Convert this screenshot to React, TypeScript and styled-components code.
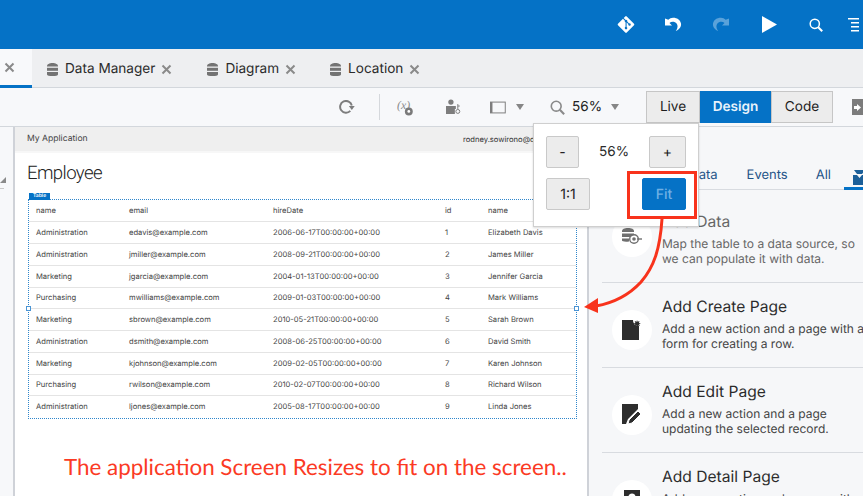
import React from "react";
import styled, { createGlobalStyle } from "styled-components";
import { FaGitAlt } from "react-icons/fa";

const GlobalStyle = createGlobalStyle`
  html, body {
    margin: 0;
    padding: 0;
    background: #f7f8fa;
  }
  body {
    font-family: Inter, "Liberation Sans", sans-serif;
    color: #222;
    text-rendering: geometricPrecision;
  }
`;

const Page = styled.div`
  position: relative;
  width: 863px;
  height: 496px;
  overflow: hidden;
  display: flex;
  flex-direction: column;
`;

const Header = styled.header`
  height: 49px;
  flex: none;
  background: #0572c6;
  display: flex;
  align-items: center;
  padding-left: 617px;
  color: #fff;
`;

const HeaderIcon = styled.div<{ $gap: number; $width: number }>`
  width: ${(p) => p.$width}px;
  margin-left: ${(p) => p.$gap}px;
  flex: none;
  display: flex;
  justify-content: center;
  align-items: center;
`;

const TabBar = styled.div`
  height: 38px;
  flex: none;
  background: #eeeff1;
  border-bottom: 1px solid #d3d7dc;
  display: flex;
`;

const ActiveTab = styled.div`
  width: 32px;
  background: #f8f9fb;
  border-bottom: 3px solid #0572c6;
  margin-bottom: -1px;
  display: flex;
  align-items: center;
  padding: 1px 0 0 4px;
  box-sizing: border-box;
`;

const Tab = styled.div<{ $gap: number }>`
  display: flex;
  align-items: center;
  font-size: 13.6px;
  color: #2b2b2b;
  margin-left: ${(p) => p.$gap}px;
  padding-top: 2px;
  gap: 7px;
`;

const TabClose = styled.span`
  display: inline-flex;
  margin-left: -1px;
`;

const Toolbar = styled.div`
  height: 38px;
  flex: none;
  background: #f7f8fa;
  border-bottom: 1px solid #d3d7dc;
  display: flex;
  align-items: center;
  padding-left: 339px;
`;

const ToolDivider = styled.div`
  width: 1px;
  height: 26px;
  background: #d5d8dc;
  margin: 0 17px 0 24px;
`;

const ZoomValue = styled.span`
  font-size: 13.6px;
  color: #222;
  margin: 0 9px 0 7px;
`;

const Caret = styled.span<{ $gap?: number }>`
  width: 0;
  height: 0;
  border-left: 4.5px solid transparent;
  border-right: 4.5px solid transparent;
  border-top: 6px solid #868686;
  margin-left: ${(p) => p.$gap ?? 0}px;
`;

const ModeGroup = styled.div`
  display: flex;
  height: 32px;
  margin-left: 27px;
  border-radius: 2px;
`;

const ModeButton = styled.div<{ $active?: boolean; $width: number }>`
  width: ${(p) => p.$width}px;
  box-sizing: border-box;
  display: flex;
  align-items: center;
  justify-content: center;
  font-size: 13.6px;
  font-weight: ${(p) => (p.$active ? 600 : 400)};
  color: ${(p) => (p.$active ? "#e8f2fb" : "#1d1d1d")};
  background: ${(p) => (p.$active ? "#0572c6" : "#ececec")};
  border: 1px solid ${(p) => (p.$active ? "#0572c6" : "#c6c6c6")};
`;

const ToolEnd = styled.div`
  margin-left: 19px;
  width: 11px;
  height: 16px;
  background: #7c7c7c;
  display: flex;
  align-items: center;
  justify-content: center;
  flex: none;
`;

const Body = styled.div`
  flex: 1;
  display: flex;
  min-height: 0;
`;

const Gutter = styled.div`
  width: 13px;
  flex: none;
  background: #f7f8fa;
  border-right: 2px solid #cfd2d8;
  padding-top: 50px;
`;

const GutterMark = styled.div`
  width: 0;
  height: 0;
  border-left: 6px solid transparent;
  border-bottom: 6px solid #8a8a8a;
`;

const GutterRule = styled.div`
  width: 4px;
  height: 1px;
  margin-top: 5px;
  background: #c9c9c9;
`;

const Canvas = styled.main`
  width: 572px;
  flex: none;
  background: #fff;
  border-right: 2px solid #cfd2d8;
`;

const AppBar = styled.div`
  height: 24px;
  background: #efefef;
  border-bottom: 2px solid #f7f7f7;
  display: flex;
  align-items: center;
  justify-content: space-between;
  padding: 0 12px;
  font-size: 8.6px;
  color: #444;
`;

const AppUser = styled.span`
  font-size: 7.6px;
  color: #333;
  white-space: nowrap;
  width: 112px;
  overflow: hidden;
`;

const PageTitle = styled.h1`
  margin: 0;
  padding: 9px 0 0 12px;
  height: 36px;
  box-sizing: border-box;
  font-family: Roboto, Inter, sans-serif;
  font-size: 18.6px;
  font-weight: 300;
  letter-spacing: -0.6px;
  color: #222;
`;

const TableWrap = styled.div`
  position: relative;
  margin: 10px 0 0 13px;
  width: 549px;
  box-sizing: border-box;
  border: 1px dotted #2f86cc;
`;

const TableBadge = styled.span`
  position: absolute;
  top: -7px;
  left: 0;
  height: 7px;
  width: 21px;
  background: #0572c6;
  color: #fff;
  font-size: 5px;
  font-weight: 600;
  line-height: 7px;
  text-align: center;
`;

const Handle = styled.span<{ $side: "left" | "right" }>`
  position: absolute;
  top: 106px;
  ${(p) => p.$side}: -3px;
  width: 3px;
  height: 3px;
  background: #fff;
  border: 1px solid #4a94d4;
`;

const Grid = styled.table`
  width: 100%;
  border-collapse: collapse;
  table-layout: fixed;
  font-size: 7.6px;
  color: #444;

  td {
    height: 21.75px;
    padding: 0 0 0 7px;
    box-sizing: border-box;
    white-space: nowrap;
    border-top: 1px solid #e4e4e4;
  }

  tr:first-child td {
    border-top: none;
  }
`;

const Annotation = styled.div`
  margin: 34px 0 0 49px;
  font-family: Lato, "Open Sans", sans-serif;
  font-size: 22.4px;
  color: #fb3a24;
  white-space: nowrap;
`;

const Side = styled.aside`
  flex: 1;
  min-width: 0;
  background: #f6f7f9;
  padding: 0 0 0 13px;
  overflow: hidden;
`;

const SideTabs = styled.div`
  height: 63px;
  border-bottom: 1px solid #d8dbe0;
  position: relative;
  box-sizing: border-box;
  display: flex;
  align-items: flex-end;
  justify-content: flex-end;
  color: #1f5488;
  font-size: 13px;
  padding-bottom: 6px;
`;

const SideTab = styled.span<{ $gap: number }>`
  margin-right: ${(p) => p.$gap}px;
`;

const SideTabIcon = styled.span`
  position: absolute;
  right: 0;
  bottom: -1px;
  width: 19px;
  height: 20px;
  border-bottom: 3px solid #0572c6;
  box-sizing: border-box;
  display: flex;
  justify-content: flex-end;
  overflow: hidden;
`;

const Item = styled.section`
  height: 85px;
  box-sizing: border-box;
  display: grid;
  grid-template-columns: 40px 1fr;
  column-gap: 10px;
  padding: 20px 0 0 10px;
  border-bottom: 1px solid #d8dbe0;
  white-space: nowrap;
`;

const FirstItem = styled(Item)`
  height: 93px;
`;

const IconDisc = styled.div`
  width: 40px;
  height: 40px;
  margin-top: 7px;
  border-radius: 50%;
  background: #fff;
  display: flex;
  align-items: center;
  justify-content: center;
`;

const ItemTitle = styled.div<{ $muted?: boolean }>`
  font-size: 15.6px;
  line-height: 20px;
  color: ${(p) => (p.$muted ? "#666" : "#2b2b2b")};
  margin-top: ${(p) => (p.$muted ? 2 : -6)}px;
`;

const ItemText = styled.div<{ $muted?: boolean }>`
  margin-top: 4px;
  font-size: 12px;
  line-height: 15px;
  color: ${(p) => (p.$muted ? "#666" : "#444")};
`;

const ZoomPopup = styled.div`
  position: absolute;
  left: 533px;
  top: 123px;
  width: 166px;
  height: 104px;
  box-sizing: border-box;
  background: #fff;
  border: 1px solid #cfcfcf;
  box-shadow: 0 1px 2px rgba(0, 0, 0, 0.15);
  display: grid;
  grid-template-columns: 33px 1fr 37px;
  grid-template-rows: 32px 32px;
  row-gap: 10px;
  padding: 12px 12px 0;
`;

const PopupButton = styled.div<{ $primary?: boolean; $width?: number }>`
  width: ${(p) => p.$width ?? 33}px;
  box-sizing: border-box;
  display: flex;
  align-items: center;
  justify-content: center;
  border-radius: 2px;
  font-size: 14px;
  font-weight: ${(p) => (p.$primary ? 500 : 400)};
  color: ${(p) => (p.$primary ? "#6fb0e4" : "#222")};
  background: ${(p) => (p.$primary ? "#0572c6" : "#ececec")};
  border: 1px solid ${(p) => (p.$primary ? "#0572c6" : "#c9c9c9")};
`;

const PopupValue = styled.div`
  font-size: 13.6px;
  display: flex;
  align-items: center;
  justify-content: center;
  color: #2b2b2b;
`;

const Callout = styled.svg`
  position: absolute;
  left: 0;
  top: 0;
  pointer-events: none;
`;

const FitLayer = styled.div`
  position: absolute;
  left: 642px;
  top: 178px;
  height: 32px;
  display: flex;
`;

type Row = [string, string, string, string, string];

const rows: Row[] = [
  ["name", "email", "hireDate", "id", "name"],
  ["Administration", "edavis@example.com", "2006-06-17T00:00:00+00:00", "1", "Elizabeth Davis"],
  ["Administration", "jmiller@example.com", "2008-09-21T00:00:00+00:00", "2", "James Miller"],
  ["Marketing", "jgarcia@example.com", "2004-01-13T00:00:00+00:00", "3", "Jennifer Garcia"],
  ["Purchasing", "mwilliams@example.com", "2009-01-03T00:00:00+00:00", "4", "Mark Williams"],
  ["Marketing", "sbrown@example.com", "2010-05-21T00:00:00+00:00", "5", "Sarah Brown"],
  ["Administration", "dsmith@example.com", "2008-06-25T00:00:00+00:00", "6", "David Smith"],
  ["Marketing", "kjohnson@example.com", "2009-02-05T00:00:00+00:00", "7", "Karen Johnson"],
  ["Purchasing", "rwilson@example.com", "2010-02-07T00:00:00+00:00", "8", "Richard Wilson"],
  ["Administration", "ljones@example.com", "2005-08-17T00:00:00+00:00", "9", "Linda Jones"],
];

const CloseIcon = () => (
  <svg width="11" height="11" viewBox="0 0 11 11">
    <path d="M1.5 1.5l8 8M9.5 1.5l-8 8" stroke="#8a8a8a" strokeWidth="2" />
  </svg>
);

const DbIcon = () => (
  <svg width="11" height="13" viewBox="0 0 11 13" fill="#737373">
    <path d="M0 3c0-1.6 2.4-3 5.5-3S11 1.400 11 3v.6H0z" />
    <rect y="4.800" width="11" height="3" />
    <path d="M0 9h11v2.500c0 1-2.400 1.500-5.500 1.500S0 12.500 0 11.500z" />
  </svg>
);

const Search = ({ color, size }: { color: string; size: number }) => (
  <svg width={size} height={size} viewBox="0 0 14 14" fill="none">
    <circle cx="5.800" cy="5.800" r="4.600" stroke={color} strokeWidth="1.500" />
    <path d="M9.200 9.200l4 4" stroke={color} strokeWidth="2" />
  </svg>
);

const UndoArrow = ({ flip, color }: { flip?: boolean; color: string }) => (
  <svg width="17" height="15" viewBox="0 0 17 15" style={flip ? { transform: "scaleX(-1)" } : undefined}>
    <path d="M0 1.500v7h7L4.500 6C6.500 4.200 10 4.600 11.600 6.500c1.400 1.800 1.400 4.700-.8 7.500 3.500-1.400 5.700-4.300 5.200-7.500C15.300 2.600 11.500.5 8 .7 6.200.8 4.600 1.500 3.300 2.800z" fill={color} />
  </svg>
);

const App = () => (
  <Page>
    <GlobalStyle />
    <Header>
      <HeaderIcon $gap={0} $width={18}><FaGitAlt size={19} /></HeaderIcon>
      <HeaderIcon $gap={30} $width={17}><UndoArrow color="#fff" /></HeaderIcon>
      <HeaderIcon $gap={30} $width={17}><UndoArrow flip color="#5aa2da" /></HeaderIcon>
      <HeaderIcon $gap={33} $width={15}>
        <svg width="15" height="17" viewBox="0 0 15 17"><path d="M0 0l15 8.500L0 17z" fill="#fff" /></svg>
      </HeaderIcon>
      <HeaderIcon $gap={32} $width={14}><Search color="#fff" size={14} /></HeaderIcon>
      <HeaderIcon $gap={25} $width={11}>
        <svg width="11" height="15" viewBox="0 0 11 15" fill="#fff">
          <rect x="0" y="1" width="11" height="1.500" />
          <rect x="3" y="5" width="8" height="1.500" />
          <rect x="3" y="9" width="8" height="1.500" />
          <rect x="3" y="13" width="8" height="1.500" />
        </svg>
      </HeaderIcon>
    </Header>

    <TabBar>
      <ActiveTab><CloseIcon /></ActiveTab>
      <Tab $gap={15}><DbIcon />Data Manager<TabClose><CloseIcon /></TabClose></Tab>
      <Tab $gap={35}><DbIcon />Diagram<TabClose><CloseIcon /></TabClose></Tab>
      <Tab $gap={34}><DbIcon />Location<TabClose><CloseIcon /></TabClose></Tab>
    </TabBar>

    <Toolbar>
      <svg width="16" height="14" viewBox="0 0 16 14" fill="none">
        <path d="M13 5.500A6 6 0 1 0 11.500 11" stroke="#7d7d7d" strokeWidth="2" />
        <path d="M10 6h6l-3 4z" fill="#7d7d7d" />
      </svg>
      <ToolDivider />
      <svg width="17" height="17" viewBox="0 0 17 17" fill="none">
        <text x="0" y="10" fontSize="12" fontStyle="italic" fontFamily="Liberation Serif, serif" fill="#8a8a8a">(x)</text>
        <circle cx="12" cy="12.500" r="4" fill="#7a7a7a" />
        <circle cx="12" cy="12.500" r="1.400" fill="#fff" />
      </svg>
      <svg width="15" height="16" viewBox="0 0 15 16" style={{ marginLeft: 33 }}>
        <circle cx="5" cy="3" r="2.700" fill="#7d7d7d" />
        <path d="M0 7h10v3l-1 0v5H0z" fill="#7d7d7d" />
        <circle cx="12" cy="12.500" r="2" fill="none" stroke="#7d7d7d" />
        <path d="M12 5v5M12 7h2" stroke="#7d7d7d" />
      </svg>
      <svg width="17" height="13" viewBox="0 0 17 13" fill="none" style={{ marginLeft: 29 }}>
        <rect x="0.500" y="1" width="15" height="11" stroke="#7d7d7d" />
        <rect x="0.500" y="1" width="2" height="11" fill="#7d7d7d" />
      </svg>
      <Caret $gap={9} />
      <span style={{ marginLeft: 26, display: "flex" }}><Search color="#8a8a8a" size={15} /></span>
      <ZoomValue>56%</ZoomValue>
      <Caret />
      <ModeGroup>
        <ModeButton $width={54}>Live</ModeButton>
        <ModeButton $width={71} $active>Design</ModeButton>
        <ModeButton $width={62}>Code</ModeButton>
      </ModeGroup>
      <ToolEnd>
        <svg width="7" height="7" viewBox="0 0 7 7"><path d="M0 2h3V0l4 3.500L3 7V5H0z" fill="#fff" /></svg>
      </ToolEnd>
    </Toolbar>

    <Body>
      <Gutter>
        <GutterMark />
        <GutterRule />
      </Gutter>
      <Canvas>
        <AppBar>
          <span>My Application</span>
          <AppUser>rodney.sowirono@oracle.com</AppUser>
        </AppBar>
        <PageTitle>Employee</PageTitle>
        <TableWrap>
          <TableBadge>Table</TableBadge>
          <Handle $side="left" />
          <Handle $side="right" />
          <Grid>
            <colgroup>
              <col style={{ width: 93 }} />
              <col style={{ width: 144 }} />
              <col style={{ width: 172 }} />
              <col style={{ width: 43 }} />
              <col />
            </colgroup>
            <tbody>
              {rows.map((row, i) => (
                <tr key={i}>
                  {row.map((cell, j) => <td key={j}>{cell}</td>)}
                </tr>
              ))}
            </tbody>
          </Grid>
        </TableWrap>
        <Annotation>The application Screen Resizes to fit on the screen..</Annotation>
      </Canvas>
      <Side>
        <SideTabs>
          <SideTab $gap={29}>Data</SideTab>
          <SideTab $gap={28}>Events</SideTab>
          <SideTab $gap={32}>All</SideTab>
          <SideTabIcon>
            <svg width="13" height="15" viewBox="0 0 13 15" style={{ flex: "none", marginRight: -3 }}>
              <path d="M1 0h11L9 4H4zM0 5h4l2.500 3L9 5h4v10H0z" fill="#1b5f99" />
            </svg>
          </SideTabIcon>
        </SideTabs>
        <FirstItem>
          <IconDisc>
            <svg width="20" height="18" viewBox="0 0 20 18">
              <path d="M0 3c0-1.700 2.500-3 6-3s6 1.300 6 3v1H0z" fill="#6f6f6f" />
              <path d="M0 5.500h12v1.500c-2 .4-3 1.400-3.500 2H0zM0 10.500h7v3c-4 .5-7 0-7-1z" fill="#6f6f6f" />
              <circle cx="12" cy="11" r="4.300" fill="none" stroke="#6f6f6f" strokeWidth="1.400" />
              <circle cx="12" cy="11" r="1.800" fill="#6f6f6f" />
              <path d="M15 11h5" stroke="#6f6f6f" strokeWidth="1.400" />
            </svg>
          </IconDisc>
          <div>
            <ItemTitle $muted>Add Data</ItemTitle>
            <ItemText $muted>Map the table to a data source, so<br />we can populate it with data.</ItemText>
          </div>
        </FirstItem>
        <Item>
          <IconDisc>
            <svg width="20" height="20" viewBox="0 0 20 20">
              <path d="M0 0h11a5.500 5.500 0 0 0 6 6v14H0z" fill="#2d2d2d" />
              <path d="M15 0l.7 1.800L17.500 1l-.6 1.900 2 .6-1.900.8.800 1.800-1.800-.7-.800 1.900-.8-1.900-1.900.7.800-1.800-1.900-.8 2-.6-.7-1.900 1.900.8z" fill="#2d2d2d" />
            </svg>
          </IconDisc>
          <div>
            <ItemTitle>Add Create Page</ItemTitle>
            <ItemText>Add a new action and a page with a<br />form for creating a row.</ItemText>
          </div>
        </Item>
        <Item>
          <IconDisc>
            <svg width="20" height="22" viewBox="0 0 20 22">
              <path d="M0 0h16v5L6 15l-2 5H0z" fill="#2d2d2d" />
              <path d="M7 16l9-9 3 3-9 9-4 1z" fill="#2d2d2d" stroke="#fff" strokeWidth="1" />
            </svg>
          </IconDisc>
          <div>
            <ItemTitle>Add Edit Page</ItemTitle>
            <ItemText>Add a new action and a page<br />updating the selected record.</ItemText>
          </div>
        </Item>
        <Item>
          <IconDisc>
            <svg width="16" height="20" viewBox="0 0 16 20">
              <path d="M0 0h16v20H0z" fill="#2d2d2d" />
              <circle cx="8" cy="7" r="3.500" fill="#fff" />
            </svg>
          </IconDisc>
          <div>
            <ItemTitle>Add Detail Page</ItemTitle>
            <ItemText>Add a new action and a page with</ItemText>
          </div>
        </Item>
      </Side>
    </Body>

    <ZoomPopup>
      <PopupButton>-</PopupButton>
      <PopupValue>56%</PopupValue>
      <PopupButton $width={37}>+</PopupButton>
      <PopupButton $width={44}>1:1</PopupButton>
    </ZoomPopup>

    <Callout width="863" height="496" viewBox="0 0 863 496">
      <rect x="628.500" y="172.500" width="67" height="45" fill="none" stroke="#f8331c" strokeWidth="3" />
      <path d="M662 219c-2 30-8 48-21 63-12 13-28 21-45 24" fill="none" stroke="#f8331c" strokeWidth="3" />
      <path d="M584 307l14-9 0 15z" fill="#f8331c" />
    </Callout>
    <FitLayer>
      <PopupButton $primary $width={44}>Fit</PopupButton>
    </FitLayer>
  </Page>
);

export default App;
